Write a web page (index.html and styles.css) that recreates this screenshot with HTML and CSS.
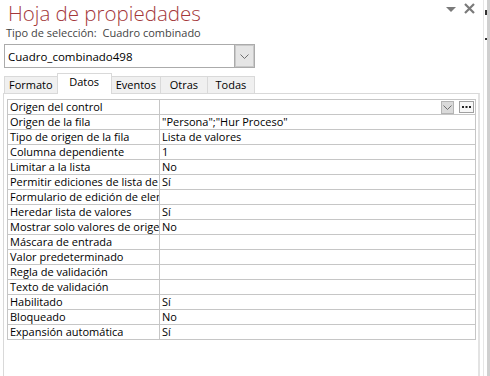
FILE: index.html
```html
<!DOCTYPE html>
<html lang="es">
<head>
<meta charset="utf-8">
<title>Hoja de propiedades</title>
<link rel="stylesheet" href="styles.css">
</head>
<body>
<div class="window">
  <div class="sheet">
    <div class="header">
      <h1 class="title">Hoja de propiedades</h1>
      <div class="controls">
        <svg class="menu-ico" width="10" height="5" viewBox="0 0 10 5"><path d="M0 0H10L5 5Z" fill="#7a7a7a"/></svg>
        <svg class="close-ico" width="11" height="11" viewBox="0 0 11 11"><path d="M1 1L10 10M10 1L1 10" stroke="#7a7a7a" stroke-width="2.2"/></svg>
      </div>
    </div>
    <div class="seltype">Tipo de selección:&nbsp; Cuadro combinado</div>
    <div class="combo">
      <span class="combo-text">Cuadro_combinado498</span>
      <span class="combo-btn"><svg width="9" height="5" viewBox="0 0 9 5"><path d="M0.5 0.5L4.5 4.5L8.5 0.5" fill="none" stroke="#6e6e6e" stroke-width="1"/></svg></span>
    </div>
    <div class="tabs">
      <div class="tab">Formato</div>
      <div class="tab active">Datos</div>
      <div class="tab">Eventos</div>
      <div class="tab">Otras</div>
      <div class="tab">Todas</div>
    </div>
    <div class="panel">
      <table class="props">
        <colgroup><col class="c-label"><col></colgroup>
        <tr><td>Origen del control</td><td><div class="cell-tools"><span class="drop-btn"><svg width="9" height="5" viewBox="0 0 9 5"><path d="M0.5 0.5L4.5 4.5L8.5 0.5" fill="none" stroke="#6e6e6e" stroke-width="1"/></svg></span><span class="build-btn"><svg width="11" height="3" viewBox="0 0 11 3"><rect x="1" y="0" width="2" height="2" fill="#222"/><rect x="4.5" y="0" width="2" height="2" fill="#222"/><rect x="8" y="0" width="2" height="2" fill="#222"/></svg></span></div></td></tr>
        <tr><td>Origen de la fila</td><td>"Persona";"Hur Proceso"</td></tr>
        <tr><td>Tipo de origen de la fila</td><td>Lista de valores</td></tr>
        <tr><td>Columna dependiente</td><td>1</td></tr>
        <tr><td>Limitar a la lista</td><td>No</td></tr>
        <tr><td>Permitir ediciones de lista de valores</td><td>Sí</td></tr>
        <tr><td>Formulario de edición de elementos de lista</td><td></td></tr>
        <tr><td>Heredar lista de valores</td><td>Sí</td></tr>
        <tr><td>Mostrar solo valores de origen de fila</td><td>No</td></tr>
        <tr><td>Máscara de entrada</td><td></td></tr>
        <tr><td>Valor predeterminado</td><td></td></tr>
        <tr><td>Regla de validación</td><td></td></tr>
        <tr><td>Texto de validación</td><td></td></tr>
        <tr><td>Habilitado</td><td>Sí</td></tr>
        <tr><td>Bloqueado</td><td>No</td></tr>
        <tr><td>Expansión automática</td><td>Sí</td></tr>
      </table>
    </div>
  </div>
  <div class="edge">
    <span class="mark m1"></span>
    <span class="mark m2"></span>
  </div>
</div>
</body>
</html>
```

FILE: styles.css
```css
* { box-sizing: border-box; }
html, body { margin: 0; padding: 0; background: #fff; }
body {
  width: 490px;
  height: 376px;
  overflow: hidden;
  font-family: "Open Sans", "Noto Sans", sans-serif;
  font-size: 11px;
  color: #000;
}
.window {
  display: flex;
  width: 490px;
  height: 376px;
}
.sheet {
  width: 483px;
  height: 376px;
  display: flex;
  flex-direction: column;
}
.header {
  display: flex;
  justify-content: space-between;
  align-items: flex-start;
  height: 26px;
  padding-left: 8px;
}
.title {
  margin: 0;
  font-weight: 300;
  font-size: 20.5px;
  line-height: 26px;
  height: 26px;
  color: #a4373a;
}
.controls {
  display: flex;
  align-items: flex-start;
  gap: 8px;
  margin-top: 3px;
  margin-right: 8px;
}
.menu-ico { margin-top: 4px; }
.seltype {
  padding-left: 6px;
  height: 14px;
  line-height: 14px;
  font-size: 11px;
  color: #444;
}
.combo {
  margin: 4px 0 0 4px;
  width: 251px;
  height: 24px;
  border: 1px solid #ababab;
  display: flex;
  align-items: center;
  justify-content: space-between;
}
.combo-text {
  padding-left: 3px;
  font-size: 11.5px;
}
.combo-btn {
  width: 19px;
  height: 22px;
  border: 1px solid #c9c9c9;
  outline: 1px solid #ababab;
  background: #e5e5e5;
  display: flex;
  align-items: center;
  justify-content: center;
}
.tabs {
  margin-top: 5px;
  padding-left: 4px;
  height: 20px;
  display: flex;
  align-items: flex-end;
  position: relative;
  z-index: 1;
}
.tab {
  height: 17px;
  min-width: 48px;
  padding: 0 4px;
  line-height: 15px;
  text-align: center;
  background: #f0f0f0;
  border: 1px solid #d9d9d9;
  border-bottom: none;
  margin-left: -1px;
  font-size: 11px;
}
.tab:first-child { margin-left: 0; }
.tab.active {
  height: 21px;
  min-width: 55px;
  background: #fff;
  line-height: 16px;
  margin-bottom: -1px;
  position: relative;
}
.panel {
  flex: 1;
  margin-left: 3px;
  width: 477px;
  border-top: 1px solid #d9d9d9;
  border-left: 1px solid #d9d9d9;
  border-right: 2px solid #e3e3e3;
  padding: 5px 1px 0 3px;
}
.props {
  width: 469px;
  border-collapse: collapse;
  table-layout: fixed;
}
.c-label { width: 152px; }
.props td {
  border: 1px solid #c6c6c6;
  padding: 0 0 0 2px;
  height: 14px;
  line-height: 14px;
  white-space: nowrap;
  overflow: hidden;
  font-size: 11px;
}
.cell-tools {
  display: flex;
  justify-content: flex-end;
  align-items: center;
  gap: 5px;
  padding-right: 1px;
  height: 14px;
}
.drop-btn {
  width: 13px;
  height: 13px;
  background: #dadada;
  border: 1px solid #b4b4b4;
  display: flex;
  align-items: center;
  justify-content: center;
}
.build-btn {
  width: 15px;
  height: 12px;
  border: 1px solid #a0a0a0;
  background: #f7f7f7;
  display: flex;
  align-items: center;
  justify-content: center;
}
.edge {
  width: 7px;
  height: 376px;
  border-left: 1px solid #e6e6e6;
  border-right: 3px solid #cfcfcf;
  display: flex;
  flex-direction: column;
  align-items: flex-end;
}
.mark {
  display: block;
  width: 2px;
  background: #333;
}
.m1 { height: 5px; margin-top: 10px; }
.m2 { height: 2px; margin-top: 23px; }
```
